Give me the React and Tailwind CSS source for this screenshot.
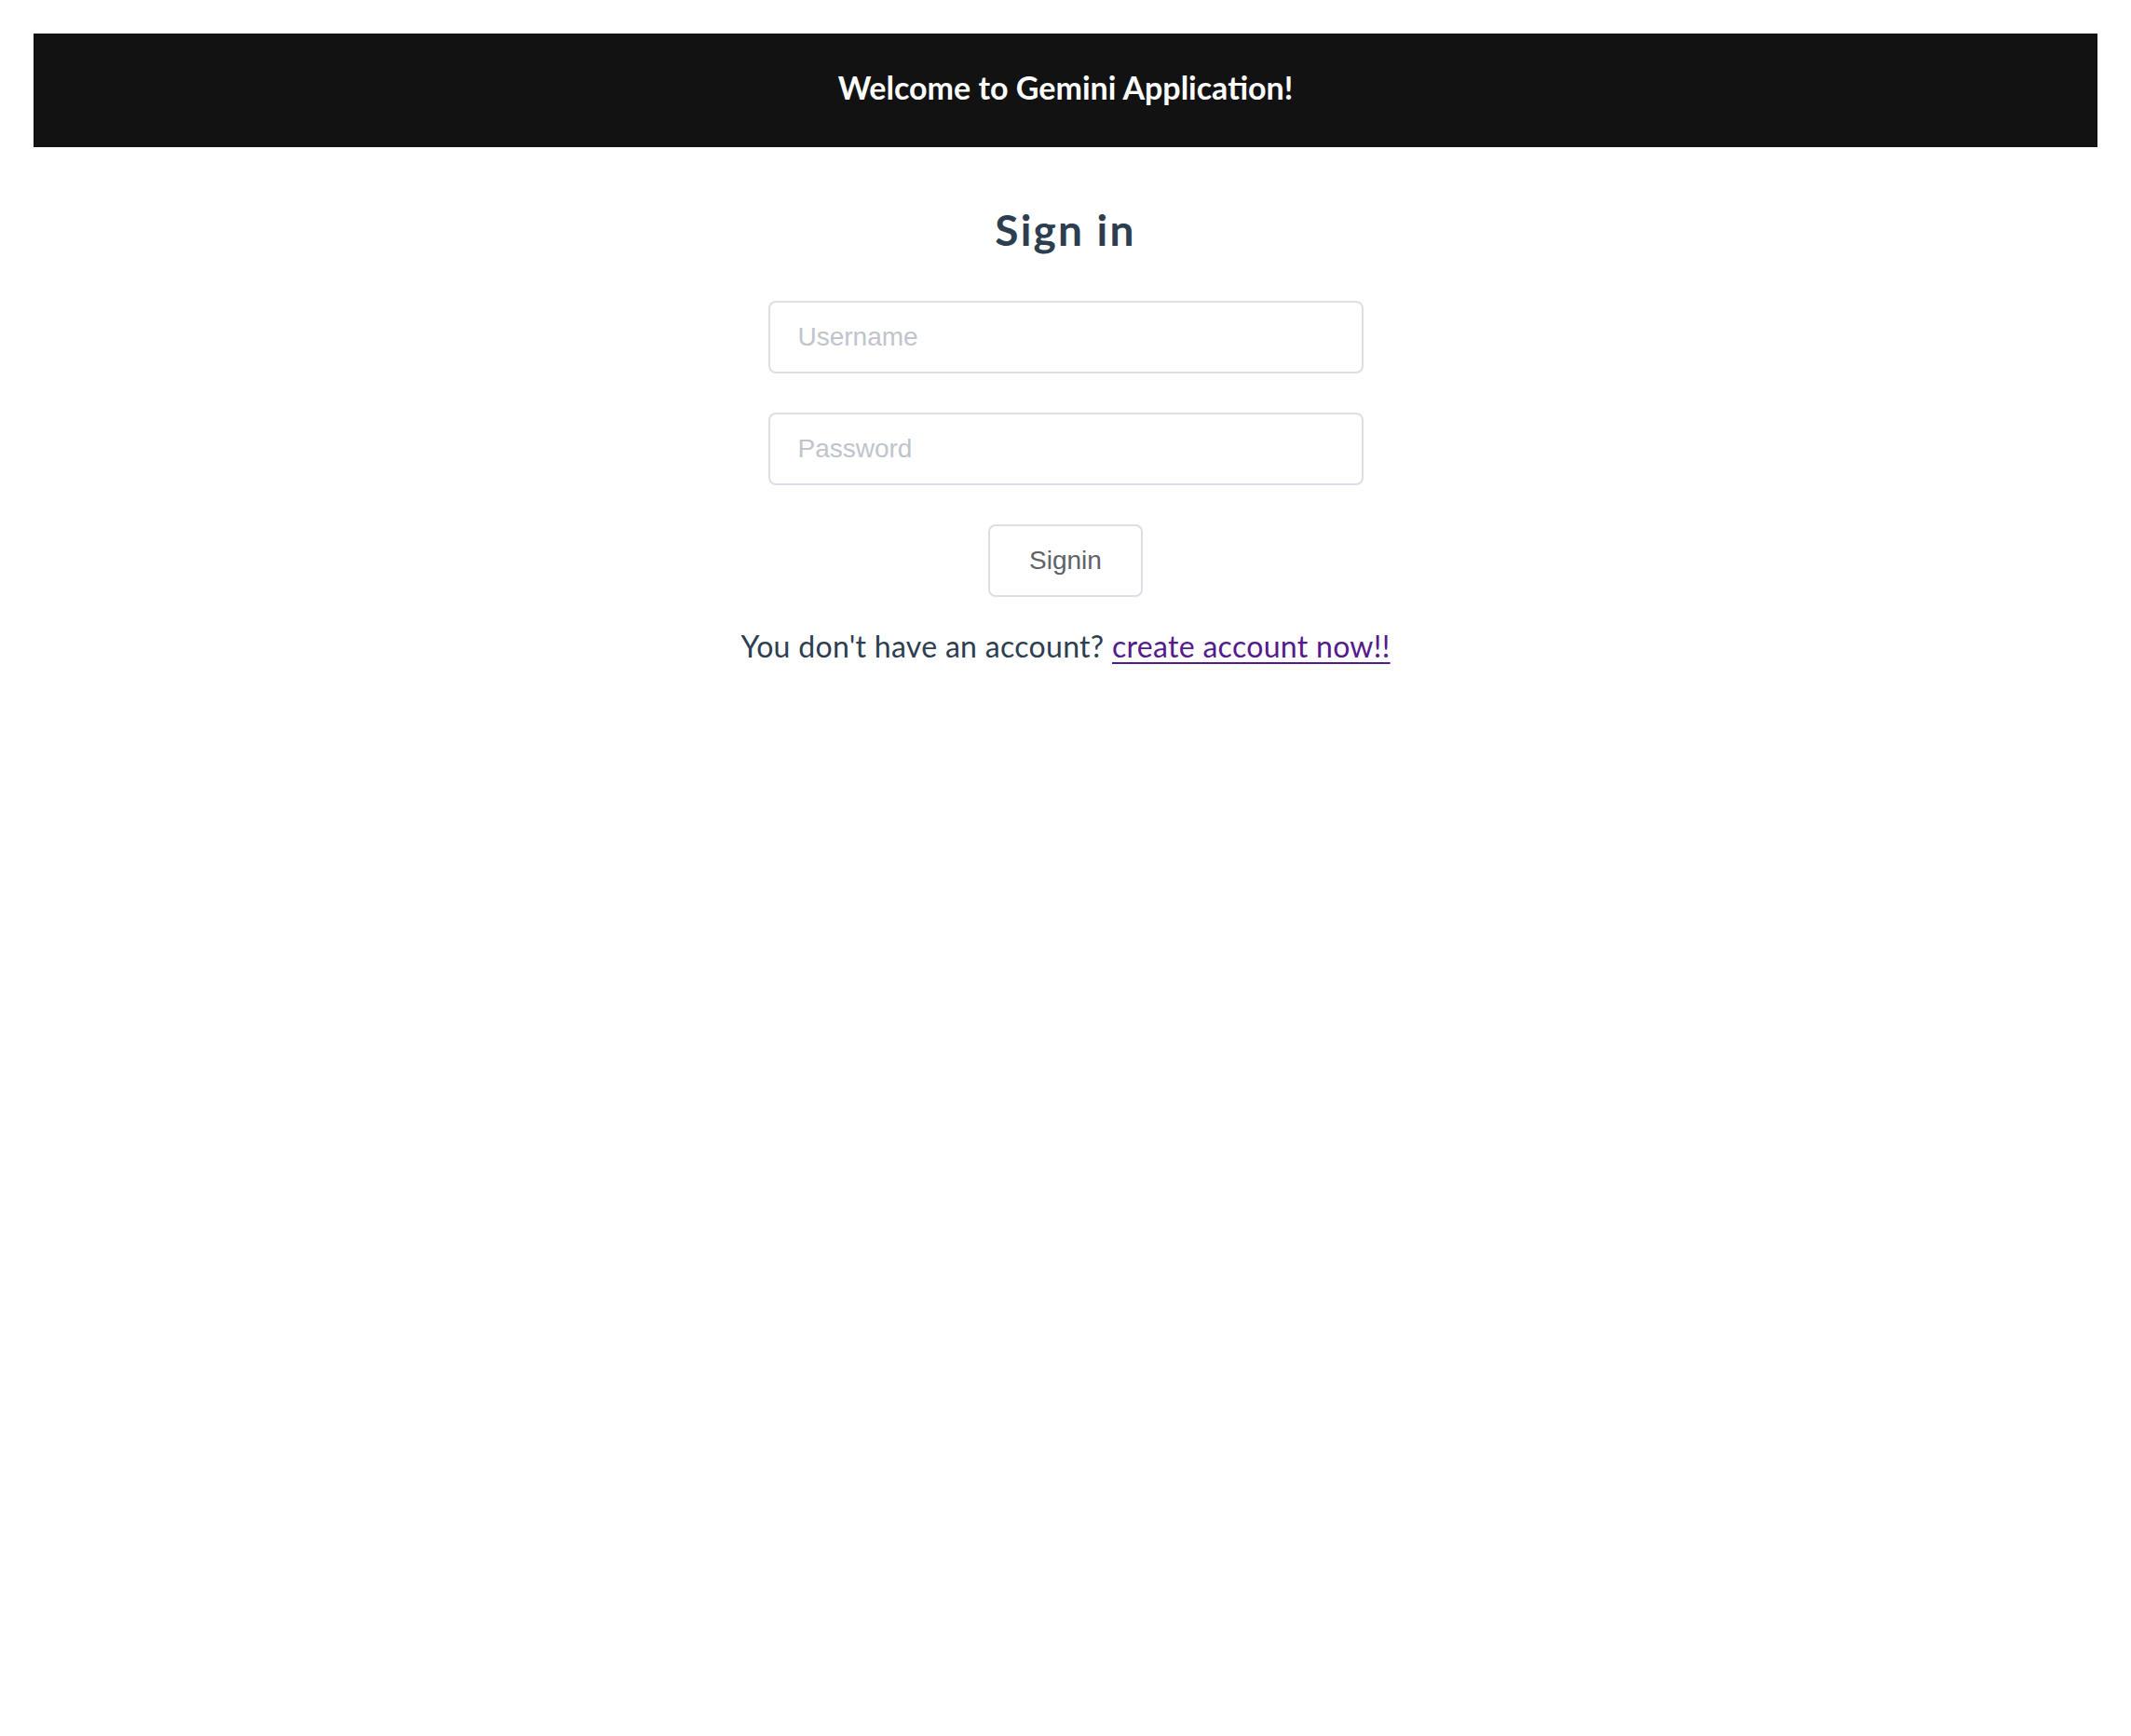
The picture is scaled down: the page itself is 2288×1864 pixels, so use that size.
import React from "react";

// login page – avenir-ish texts via Lato, element-ish form via Liberation Sans
const avenir = { fontFamily: "Lato, 'Noto Sans', sans-serif" };

export default function App() {
  return (
    <div className="min-h-screen bg-white p-[36px] text-[#2c3e50]" style={avenir}>
      <header className="h-[122px] pb-[5px] bg-[#121212] flex items-center justify-center">
        <h1 className="text-white text-[34px] font-bold leading-[1.2]">Welcome to Gemini Application!</h1>
      </header>

      <main className="flex flex-col items-center">
        <h2 className="mt-[61px] text-[46px] font-bold leading-[1.2] tracking-[2.2px]">Sign in</h2>

        <form className="mt-[49px] flex flex-col items-center font-['Liberation_Sans',Arial,sans-serif]">
          <input
            type="text"
            placeholder="Username"
            className="w-[639px] h-[78px] border-2 border-[#dcdfe6] rounded-[8px] px-[30px] text-[28px] text-[#606266] placeholder:text-[#c0c4cc] outline-none"
          />
          <input
            type="password"
            placeholder="Password"
            className="mt-[42px] w-[639px] h-[78px] border-2 border-[#dcdfe6] rounded-[8px] px-[30px] text-[28px] text-[#606266] placeholder:text-[#c0c4cc] outline-none"
          />
          <button
            type="button"
            className="mt-[42px] w-[166px] h-[78px] border-2 border-[#dcdfe6] rounded-[8px] bg-white text-[28px] text-[#606266]"
          >
            Signin
          </button>
        </form>

        <p className="mt-[34px] text-[32px] leading-[1.2] tracking-[0.3px]">
          You don't have an account?{" "}
          <a href="#" className="text-[#551a8b] underline underline-offset-[5px] decoration-2">
            create account now!!
          </a>
        </p>
      </main>
    </div>
  );
}
